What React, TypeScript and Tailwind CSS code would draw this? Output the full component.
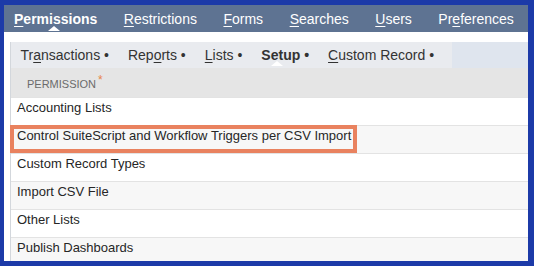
import React from "react";

const font = { fontFamily: '"Liberation Sans", Arial, sans-serif' };

function U({ children }: { children: React.ReactNode }) {
  return <span className="underline underline-offset-2 decoration-1">{children}</span>;
}

const rows: { label: string; gray: boolean }[] = [
  { label: "Accounting Lists", gray: false },
  { label: "Control SuiteScript and Workflow Triggers per CSV Import", gray: true },
  { label: "Custom Record Types", gray: false },
  { label: "Import CSV File", gray: true },
  { label: "Other Lists", gray: false },
  { label: "Publish Dashboards", gray: true },
];

export default function App() {
  return (
    <div
      className="w-[534px] h-[266px] bg-[#1c3aa8] pt-[5px] pl-[4px] pr-[6px] pb-[5px] overflow-hidden"
      style={font}
    >
      <div className="bg-white h-full flex flex-col overflow-hidden">
        {/* top nav */}
        <div className="h-[27px] shrink-0 bg-[#5e7392] flex items-center pl-[10px] gap-[26.5px] text-white text-[14px] leading-none">
          <span className="relative font-bold">
            <U>P</U>ermissions
            <span className="absolute left-[34px] top-[14px] w-0 h-0 border-l-[6px] border-r-[6px] border-b-[5px] border-l-transparent border-r-transparent border-b-white" />
          </span>
          <span>
            <U>R</U>estrictions
          </span>
          <span>
            <U>F</U>orms
          </span>
          <span>
            <U>S</U>earches
          </span>
          <span>
            <U>U</U>sers
          </span>
          <span>
            Pr<U>e</U>ferences
          </span>
        </div>
        <div className="h-[10px] shrink-0 bg-white" />
        <div className="ml-[6px] border-l border-[#d3d7dc] flex-1 flex flex-col">
          {/* sub tabs */}
          <div className="h-[26px] shrink-0 bg-[#dfe5ee] flex">
            <div className="bg-[#e9ebef] flex items-center text-[14px] text-[#333] leading-none pr-[8px]">
              <span className="px-[9.5px]">
                Tr<U>a</U>nsactions •
              </span>
              <span className="px-[9.5px]">
                Rep<U>o</U>rts •
              </span>
              <span className="px-[9.5px]">
                <U>L</U>ists •
              </span>
              <span className="px-[9.5px] relative font-bold">
                Setup •
                <span className="absolute left-[19px] top-[13px] w-0 h-0 border-l-[6px] border-r-[6px] border-b-[5px] border-l-transparent border-r-transparent border-b-white" />
              </span>
              <span className="px-[9.5px]">
                <U>C</U>ustom Record •
              </span>
            </div>
          </div>
          {/* header */}
          <div className="h-[29px] shrink-0 bg-[#e5e5e5] flex items-center pl-[16px] pt-[3px] text-[11px] text-[#6b6b6b] leading-none">
            <span>PERMISSION</span>
            <span className="text-[#e8864a] text-[12px] ml-[2px] -mt-[8px]">*</span>
          </div>
          {/* rows */}
          {rows.map((r, i) => (
            <div
              key={i}
              className={`relative h-[28px] shrink-0 flex items-center pl-[6px] pb-[8px] text-[13px] text-[#262626] border-t border-[#e3e3e3] ${
                r.gray ? "bg-[#f7f7f7]" : "bg-white"
              }`}
            >
              {r.label}
              {i === 1 && (
                <div className="absolute left-[-1px] top-[-1px] w-[347px] h-[28px] border-[4px] border-[#e9825f]" />
              )}
            </div>
          ))}
        </div>
      </div>
    </div>
  );
}
